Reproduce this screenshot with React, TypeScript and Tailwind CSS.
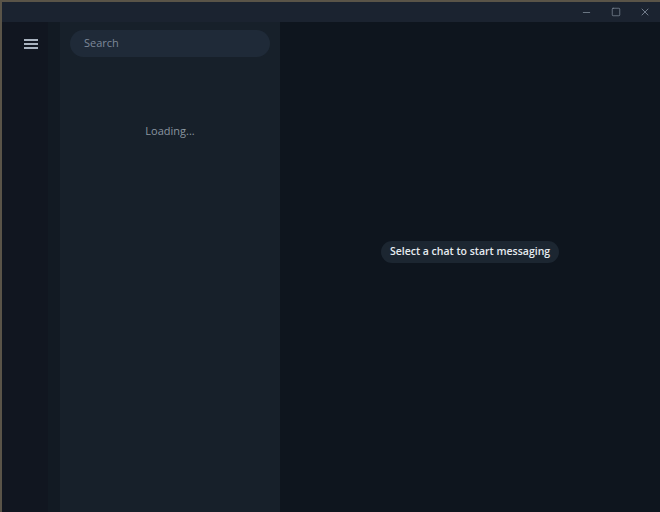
import { Minus, Square, X } from 'lucide-react';

const TitleBar = () => (
    <div className="h-[20px] bg-[#1b2330] flex justify-end items-center pr-[1px] text-[#8f9aa8]">
        <button className="w-[29px] h-full flex items-center justify-center">
            <Minus size={11} strokeWidth={1.5} />
        </button>
        <button className="w-[29px] h-full flex items-center justify-center">
            <Square size={10} strokeWidth={1.5} />
        </button>
        <button className="w-[29px] h-full flex items-center justify-center">
            <X size={12} strokeWidth={1.5} />
        </button>
    </div>
);

const SideMenu = () => (
    <aside className="w-[58px] bg-[#111620] flex flex-col items-start pt-[17px] pl-[22px] border-r-[12px] border-[#121a23]">
        <div className="flex flex-col gap-[2.5px]">
            <span className="block w-[14px] h-[1.5px] bg-[#a9b3bf]" />
            <span className="block w-[14px] h-[1.5px] bg-[#a9b3bf]" />
            <span className="block w-[14px] h-[1.5px] bg-[#a9b3bf]" />
        </div>
    </aside>
);

const ChatList = () => (
    <section className="w-[220px] bg-[#17202a] flex flex-col px-[10px] pt-[8px]">
        <div className="h-[27px] rounded-full bg-[#1f2a38] flex items-center px-[14px]">
            <span className="text-[11px] text-[#7d8898]">Search</span>
        </div>
        <p className="mt-[66px] text-center text-[11px] text-[#8a95a0]">
            Loading...
        </p>
    </section>
);

export default function App() {
    return (
        <div
            className="w-[660px] h-[512px] bg-[#5a5448] pl-[2px] pt-[2px] flex flex-col overflow-hidden"
            style={{ fontFamily: '"Open Sans", "Liberation Sans", sans-serif' }}
        >
            <div className="flex-1 flex flex-col bg-[#0e151e]">
                <TitleBar />
                <div className="flex-1 flex">
                    <SideMenu />
                    <ChatList />
                    <main className="flex-1 bg-[#0e151e] flex items-center justify-center pb-[30px]">
                        <span className="rounded-full bg-[#1c2631] px-[9px] py-[3px] text-[10.5px] font-semibold text-[#e6ebf0]">
                            Select a chat to start messaging
                        </span>
                    </main>
                </div>
            </div>
        </div>
    );
}
